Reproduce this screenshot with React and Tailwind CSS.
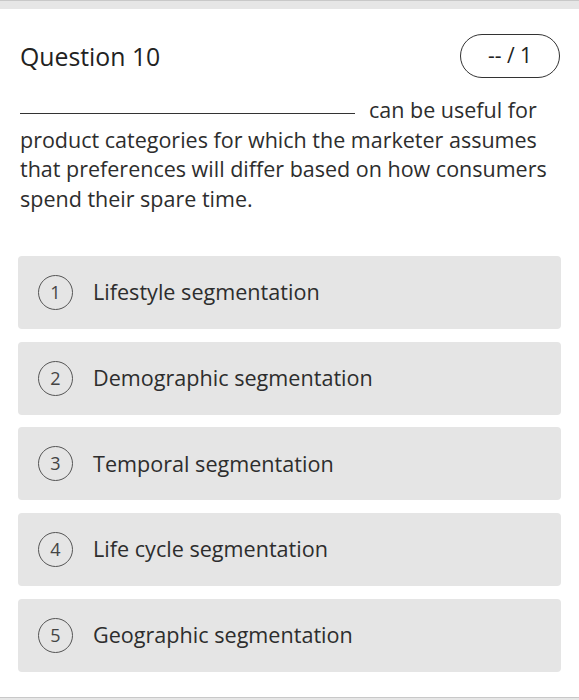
const options = [
  'Lifestyle segmentation',
  'Demographic segmentation',
  'Temporal segmentation',
  'Life cycle segmentation',
  'Geographic segmentation',
];

export default function App() {
  return (
    <div className="w-[579px] h-[700px] bg-white flex flex-col overflow-hidden text-[#2d2d2d]" style={{ fontFamily: '"Open Sans", sans-serif' }}>
      {/* top strip */}
      <div className="h-[9px] bg-[#e6e6e6] border-t border-[#c8c8c8] shrink-0" />

      <div className="flex-1 px-[18px]">
        {/* header */}
        <div className="flex items-center justify-between pt-[25px] pl-[2px] pr-[1px]">
          <h2 className="text-[24.8px] leading-[30px] text-[#222]">Question 10</h2>
          <div className="w-[100px] h-[44px] rounded-full border-[1.5px] border-[#333] flex items-center justify-center text-[21px] text-[#222]">
            -- / 1
          </div>
        </div>

        {/* question body */}
        <p className="mt-[17px] pl-[2px] text-[21.5px] leading-[29.5px] text-[#2d2d2d]">
          <span className="inline-block w-[335px] border-b border-[#333] align-baseline mr-[14px] translate-y-[-4px]" />
          can be useful for product categories for which the marketer assumes that preferences will differ based on how consumers spend their spare time.
        </p>

        {/* options */}
        <div className="mt-[43px] flex flex-col gap-[12.7px]">
          {options.map((label, i) => (
            <div key={label} className="h-[73px] bg-[#e5e5e5] rounded-[4px] flex items-center pl-[20px]">
              <div className="w-[35px] h-[35px] rounded-full border-[1.5px] border-[#555] flex items-center justify-center text-[18px] text-[#444] shrink-0">
                {i + 1}
              </div>
              <span className="ml-[20px] text-[21.6px] text-[#2d2d2d]">{label}</span>
            </div>
          ))}
        </div>
      </div>

      {/* bottom strip */}
      <div className="h-[3px] bg-[#e6e6e6] border-t border-[#c8c8c8] shrink-0" />
    </div>
  );
}
